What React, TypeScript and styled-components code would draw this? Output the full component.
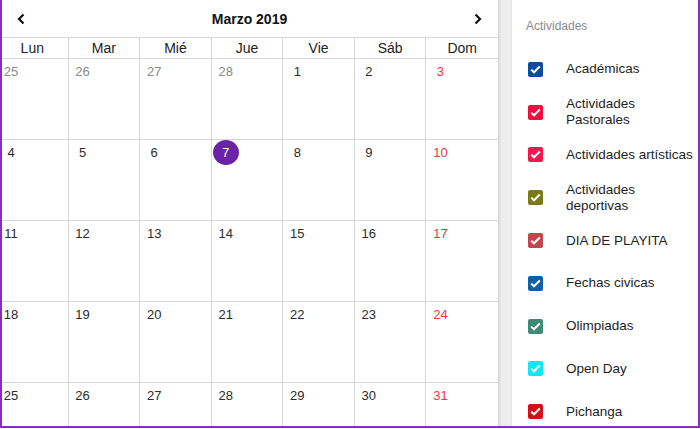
import React from 'react'
import styled, { createGlobalStyle } from 'styled-components'

const GlobalStyle = createGlobalStyle`
  html, body {
    margin: 0;
    padding: 0;
    background: #fff;
    font-family: 'Liberation Sans', Arial, sans-serif;
  }
`

const Frame = styled.div`
  box-sizing: border-box;
  width: 700px;
  height: 428px;
  border: 2px solid #8c2bc4;
  border-top: none;
  display: flex;
  overflow: hidden;
  background: #fff;
`

const Calendar = styled.div`
  flex: none;
  width: 502px;
  margin-left: -5px;
  display: flex;
  flex-direction: column;
  border-right: 1px solid #d6d6d6;
  box-sizing: border-box;
  & > * {
    flex-shrink: 0;
  }
`

const Header = styled.div`
  height: 37px;
  display: flex;
  align-items: center;
  justify-content: space-between;
  padding: 0 14px 0 18px;
  border-bottom: 1px solid #d6d6d6;
`

const Title = styled.div`
  font-size: 14px;
  font-weight: bold;
  color: #111;
`

const NavButton = styled.div`
  width: 12px;
  height: 14px;
  display: flex;
  align-items: center;
  justify-content: center;
`

const Grid = styled.div`
  display: grid;
  grid-template-columns: repeat(7, 1fr);
`

const DayName = styled.div`
  height: 20px;
  line-height: 20px;
  text-align: center;
  font-size: 14px;
  color: #222;
  border-bottom: 1px solid #d6d6d6;
  border-right: 1px solid #d6d6d6;
  &:last-child {
    border-right: none;
  }
`

const Cell = styled.div`
  height: 80px;
  border-bottom: 1px solid #d6d6d6;
  border-right: 1px solid #d6d6d6;
  &:nth-child(7n) {
    border-right: none;
  }
`

const DateNum = styled.div<{ $tone: 'muted' | 'normal' | 'sunday'; $today?: boolean }>`
  width: 26px;
  height: 25px;
  line-height: 25px;
  margin-left: 1px;
  text-align: center;
  font-size: 13px;
  border-radius: 50%;
  color: ${(p) =>
    p.$today ? '#fff' : p.$tone === 'muted' ? '#8a8a8a' : p.$tone === 'sunday' ? '#f2343f' : '#2b2b2b'};
  background: ${(p) => (p.$today ? '#6a22a8' : 'transparent')};
`

const Divider = styled.div`
  flex: none;
  width: 13px;
  background: linear-gradient(to right, #dcdcdc 0%, #ececec 18%, #efefef 80%, #e6e6e6 100%);
`

const Sidebar = styled.div`
  flex: 1;
  padding: 19px 0 0 14px;
`

const SideTitle = styled.div`
  font-size: 12px;
  color: #8a8a8a;
  height: 15px;
  line-height: 15px;
  margin-bottom: 14px;
`

const Item = styled.div`
  height: 42.8px;
  display: flex;
  align-items: center;
  padding-left: 2px;
`

const Box = styled.div<{ $color: string }>`
  flex: none;
  width: 15px;
  height: 15px;
  border-radius: 2px;
  background: ${(p) => p.$color};
  display: flex;
  align-items: center;
  justify-content: center;
  margin-right: 23px;
`

const Label = styled.div`
  font-size: 13.5px;
  line-height: 16px;
  color: #1e1e1e;
  max-width: 132px;
`

const Chevron = ({ dir }: { dir: 'left' | 'right' }) => (
  <svg width="10" height="12" viewBox="0 0 10 12">
    <path
      d={dir === 'left' ? 'M7.5 1.5 L3 6 L7.5 10.5' : 'M2.5 1.5 L7 6 L2.5 10.5'}
      fill="none"
      stroke="#111"
      strokeWidth="2.2"
    />
  </svg>
)

const Check = () => (
  <svg width="11" height="9" viewBox="0 0 11 9">
    <path d="M1.2 4.6 L4 7.3 L9.8 1.5" fill="none" stroke="#fff" strokeWidth="2" />
  </svg>
)

const dayNames = ['Lun', 'Mar', 'Mié', 'Jue', 'Vie', 'Sáb', 'Dom']

const weeks: number[][] = [
  [25, 26, 27, 28, 1, 2, 3],
  [4, 5, 6, 7, 8, 9, 10],
  [11, 12, 13, 14, 15, 16, 17],
  [18, 19, 20, 21, 22, 23, 24],
  [25, 26, 27, 28, 29, 30, 31],
]

const activities = [
  { name: 'Académicas', color: '#0d4b9f' },
  { name: 'Actividades Pastorales', color: '#f50c3e' },
  { name: 'Actividades artísticas', color: '#f3164f' },
  { name: 'Actividades deportivas', color: '#7b7a1b' },
  { name: 'DIA DE PLAYITA', color: '#c1474e' },
  { name: 'Fechas civicas', color: '#0f5ea8' },
  { name: 'Olimpiadas', color: '#3f8a72' },
  { name: 'Open Day', color: '#12e6ee' },
  { name: 'Pichanga', color: '#d2101a' },
]

const App: React.FC = () => {
  return (
    <>
      <GlobalStyle />
      <Frame>
        <Calendar>
          <Header>
            <NavButton>
              <Chevron dir="left" />
            </NavButton>
            <Title>Marzo 2019</Title>
            <NavButton>
              <Chevron dir="right" />
            </NavButton>
          </Header>
          <Grid>
            {dayNames.map((d) => (
              <DayName key={d}>{d}</DayName>
            ))}
          </Grid>
          <Grid>
            {weeks.map((week, w) =>
              week.map((n, i) => {
                const muted = w === 0 && n > 20
                const tone = muted ? 'muted' : i === 6 ? 'sunday' : 'normal'
                return (
                  <Cell key={`${w}-${i}`}>
                    <DateNum $tone={tone} $today={w === 1 && n === 7}>
                      {n}
                    </DateNum>
                  </Cell>
                )
              })
            )}
          </Grid>
        </Calendar>
        <Divider />
        <Sidebar>
          <SideTitle>Actividades</SideTitle>
          {activities.map((a) => (
            <Item key={a.name}>
              <Box $color={a.color}>
                <Check />
              </Box>
              <Label>{a.name}</Label>
            </Item>
          ))}
        </Sidebar>
      </Frame>
    </>
  )
}

export default App
